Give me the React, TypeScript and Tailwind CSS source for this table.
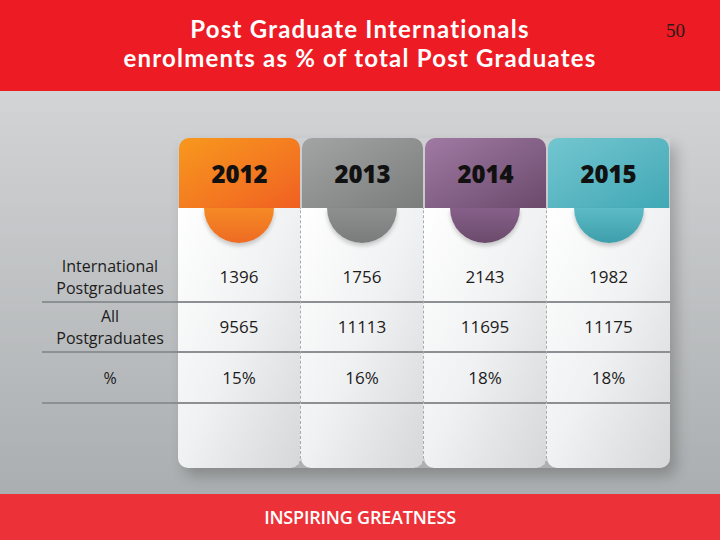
import React from "react"

const years = [
  { year: "2012", from: "from-[#f7981d]", to: "to-[#f05f22]", tab: "from-[#f58a24] to-[#ee6a23]" },
  { year: "2013", from: "from-[#a3a5a5]", to: "to-[#7b7d7d]", tab: "from-[#8e9090] to-[#7a7c7c]" },
  { year: "2014", from: "from-[#a07aa3]", to: "to-[#6b4a6c]", tab: "from-[#87608a] to-[#6a4a6b]" },
  { year: "2015", from: "from-[#72c6d0]", to: "to-[#40a8b5]", tab: "from-[#5bbac6] to-[#3d9fab]" },
]

const rows = [
  { label: ["International", "Postgraduates"], values: ["1396", "1756", "2143", "1982"] },
  { label: ["All", "Postgraduates"], values: ["9565", "11113", "11695", "11175"] },
  { label: ["%"], values: ["15%", "16%", "18%", "18%"] },
]

const rowHeights = ["h-[50px]", "h-[50px]", "h-[51px]"]

export default function App() {
  return (
    <div className="w-[720px] h-[540px] flex flex-col overflow-hidden" style={{ fontFamily: "'Open Sans', sans-serif" }}>
      {/* Header */}
      <header className="relative h-[91px] bg-[#ed1c24] flex flex-col items-center pt-[14px]">
        <h1
          className="text-white font-bold text-[24px] leading-[29px] text-center tracking-[1.2px]"
          style={{ fontFamily: "Lato, 'Open Sans', sans-serif" }}
        >
          <span className="block">Post Graduate Internationals</span>
          <span className="block">enrolments as % of total Post Graduates</span>
        </h1>
        <span className="absolute right-[35px] top-[20px] text-[19px] leading-[22px] text-[#2a1a1a]" style={{ fontFamily: "'Liberation Serif', serif" }}>
          50
        </span>
      </header>

      {/* Body */}
      <main className="flex-1 bg-gradient-to-b from-[#d2d4d6] to-[#abaeb0] pt-[47px] pl-[42px]">
        <div className="flex items-start">
          {/* Labels */}
          <div className="w-[136px] flex flex-col pt-[115px]">
            {rows.map((r, i) => (
              <div
                key={i}
                className={`${rowHeights[i]} border-b-2 border-[#8d9092] flex flex-col items-center justify-center text-[16px] leading-[22px] text-[#1c1c1c]`}
              >
                {r.label.map((l) => (
                  <span key={l}>{l}</span>
                ))}
              </div>
            ))}
          </div>

          {/* Year columns */}
          <div className="flex shadow-[6px_8px_14px_rgba(0,0,0,0.22)] rounded-b-[10px]">
            {years.map((y, ci) => (
              <div key={y.year} className="w-[123px] flex flex-col">
                <div
                  className={`h-[70px] mx-[1px] rounded-t-[10px] bg-gradient-to-br ${y.from} ${y.to} flex items-start justify-center pt-[20px]`}
                >
                  <span className="text-[24px] font-extrabold text-[#111] leading-[32px]">{y.year}</span>
                </div>
                <div
                  className={`h-[260px] flex flex-col rounded-b-[10px] bg-gradient-to-br from-[#ffffff] via-[#f0f1f2] to-[#d5d7d9] ${
                    ci < 3 ? "border-r border-dashed border-[#a9acae]" : ""
                  }`}
                >
                  <div className="h-[45px] flex justify-center">
                    <div className={`w-[70px] h-[35px] rounded-b-full bg-gradient-to-b ${y.tab} shadow-[0_3px_4px_rgba(0,0,0,0.2)]`} />
                  </div>
                  {rows.map((r, i) => (
                    <div
                      key={i}
                      className={`${rowHeights[i]} border-b-2 border-[#8d9092] flex items-center justify-center text-[17px] text-[#1c1c1c]`}
                    >
                      {r.values[ci]}
                    </div>
                  ))}
                </div>
              </div>
            ))}
          </div>
        </div>
      </main>

      {/* Footer */}
      <footer className="h-[46px] bg-[#ec3238] flex items-center justify-center">
        <span className="text-white font-semibold text-[18px] tracking-[-0.2px]">INSPIRING GREATNESS</span>
      </footer>
    </div>
  )
}
